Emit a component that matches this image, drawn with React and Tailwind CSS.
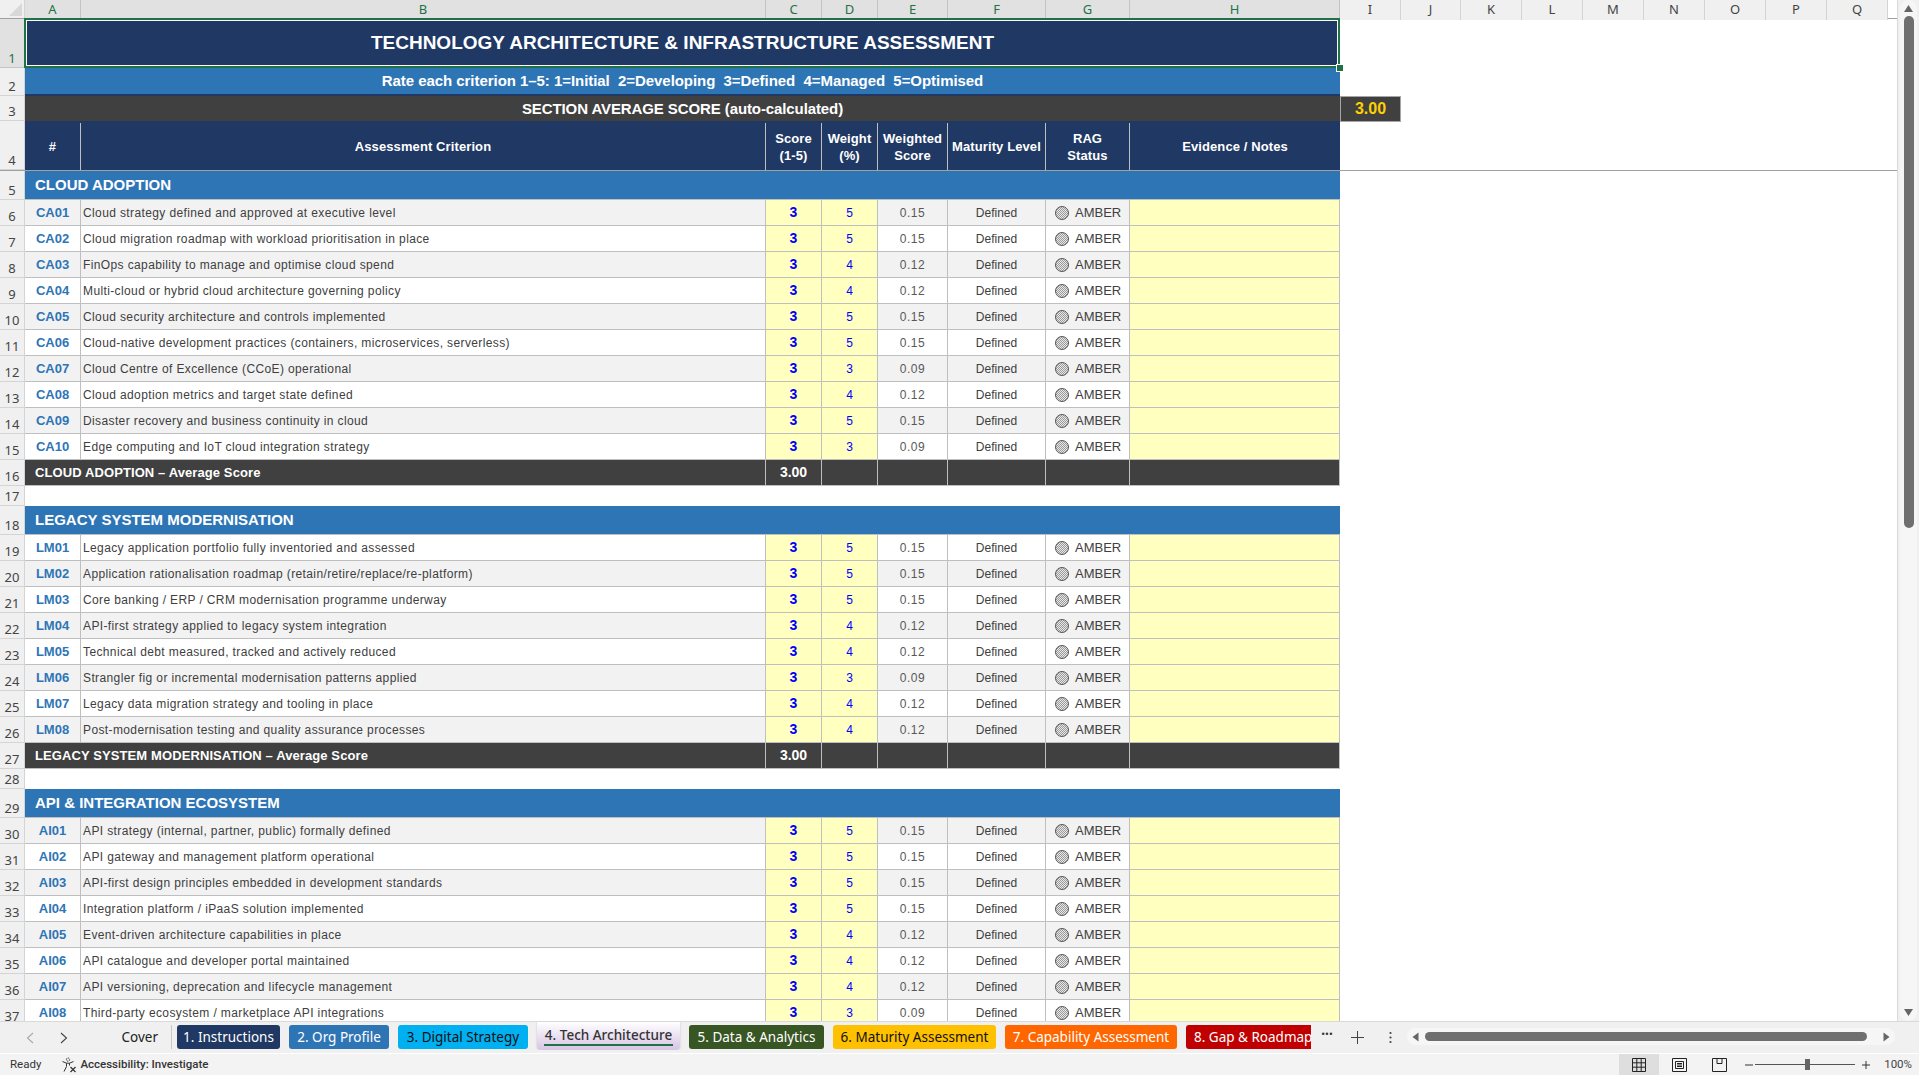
import { Fragment } from 'react'

const COLS = 'grid grid-cols-[56px_685px_56px_56px_70px_98px_84px_210px_61px_60px_61px_61px_61px_61px_61px_61px_61px]'

const sections = [
  {
    title: 'CLOUD ADOPTION',
    start: 5,
    items: [
      ['CA01', 'Cloud strategy defined and approved at executive level', 5],
      ['CA02', 'Cloud migration roadmap with workload prioritisation in place', 5],
      ['CA03', 'FinOps capability to manage and optimise cloud spend', 4],
      ['CA04', 'Multi-cloud or hybrid cloud architecture governing policy', 4],
      ['CA05', 'Cloud security architecture and controls implemented', 5],
      ['CA06', 'Cloud-native development practices (containers, microservices, serverless)', 5],
      ['CA07', 'Cloud Centre of Excellence (CCoE) operational', 3],
      ['CA08', 'Cloud adoption metrics and target state defined', 4],
      ['CA09', 'Disaster recovery and business continuity in cloud', 5],
      ['CA10', 'Edge computing and IoT cloud integration strategy', 3],
    ],
  },
  {
    title: 'LEGACY SYSTEM MODERNISATION',
    start: 18,
    items: [
      ['LM01', 'Legacy application portfolio fully inventoried and assessed', 5],
      ['LM02', 'Application rationalisation roadmap (retain/retire/replace/re-platform)', 5],
      ['LM03', 'Core banking / ERP / CRM modernisation programme underway', 5],
      ['LM04', 'API-first strategy applied to legacy system integration', 4],
      ['LM05', 'Technical debt measured, tracked and actively reduced', 4],
      ['LM06', 'Strangler fig or incremental modernisation patterns applied', 3],
      ['LM07', 'Legacy data migration strategy and tooling in place', 4],
      ['LM08', 'Post-modernisation testing and quality assurance processes', 4],
    ],
  },
  {
    title: 'API & INTEGRATION ECOSYSTEM',
    start: 29,
    items: [
      ['AI01', 'API strategy (internal, partner, public) formally defined', 5],
      ['AI02', 'API gateway and management platform operational', 5],
      ['AI03', 'API-first design principles embedded in development standards', 5],
      ['AI04', 'Integration platform / iPaaS solution implemented', 5],
      ['AI05', 'Event-driven architecture capabilities in place', 4],
      ['AI06', 'API catalogue and developer portal maintained', 4],
      ['AI07', 'API versioning, deprecation and lifecycle management', 4],
      ['AI08', 'Third-party ecosystem / marketplace API integrations', 3],
    ],
    open: true,
  },
]

const colLetters = 'ABCDEFGHIJKLMNOPQ'.split('')

const tabs = [
  { label: '1. Instructions', cls: 'w-[103px] bg-[#1f3864] text-white' },
  { label: '2. Org Profile', cls: 'w-[100px] bg-[#2e75b6] text-white' },
  { label: '3. Digital Strategy', cls: 'w-[130px] bg-[#00b0f0] text-[#111]' },
  { label: '4. Tech Architecture', active: true },
  { label: '5. Data & Analytics', cls: 'w-[135px] bg-[#375623] text-white' },
  { label: '6. Maturity Assessment', cls: 'w-[163px] bg-[#ffc000] text-[#111]' },
  { label: '7. Capability Assessment', cls: 'w-[172px] bg-[#ff6600] text-white' },
]

function RowHead({ n, selected }) {
  return (
    <div className={`w-[25px] shrink-0 flex items-end justify-center border-r border-b leading-[18px] text-[13px] font-['Noto_Sans',sans-serif] ${selected ? 'bg-[#e1e1e1] text-[#1f7246] border-[#c4c4c4]' : 'bg-[#f0f0f0] text-[#444] border-[#d4d4d4]'}`}>
      {n}
    </div>
  )
}

function Row({ n, h, selected, children }) {
  return (
    <div className={`flex ${h}`}>
      <RowHead n={n} selected={selected} />
      <div className={`${COLS} flex-1 h-full`}>{children}</div>
    </div>
  )
}

function HeaderCell({ children }) {
  return (
    <div className="flex items-center justify-center text-center border-r border-[#bfbfbf] font-bold text-[13px] tracking-[0.1px] leading-[17px] text-white last:border-r-0">
      {children}
    </div>
  )
}

function CriterionRow({ n, id, text, weight }) {
  const bg = n % 2 === 0 ? 'bg-[#f2f2f2]' : 'bg-white'
  const cell = `flex items-center justify-center border-r border-b border-[#bfbfbf] ${bg}`
  const input = 'flex items-center justify-center border-r border-b border-[#bfbfbf] bg-[#ffffbf]'
  return (
    <Row n={n} h="h-[26px]">
      <div className={`${cell} font-bold text-[13px] text-[#2e75b6]`}>{id}</div>
      <div className={`${cell} !justify-start pl-[2px] text-[12px] text-[#404040] tracking-[0.38px]`}>{text}</div>
      <div className={`${input} font-bold text-[14px] text-[#0000ff]`}>3</div>
      <div className={`${input} text-[12px] text-[#0000ff]`}>{weight}</div>
      <div className={`${cell} text-[12px] text-[#595959] tracking-[0.5px]`}>{(weight * 0.03).toFixed(2)}</div>
      <div className={`${cell} text-[12px] text-[#404040]`}>Defined</div>
      <div className={`${cell} !justify-start pl-[9px] gap-[6px] text-[13px] text-[#404040]`}>
        <span className="w-[14px] h-[14px] rounded-full border border-[#555] bg-[repeating-conic-gradient(#9a9a9a_0_25%,#e8e8e8_0_50%)] bg-[length:2px_2px]" />
        AMBER
      </div>
      <div className={input} />
    </Row>
  )
}

function Section({ title, start, items, open }) {
  const avgNum = start + items.length + 1
  return (
    <Fragment>
      <Row n={start} h="h-[29px]">
        <div className="col-span-8 flex items-center pl-[10px] bg-[#2e75b6] text-white font-bold text-[15px] border-b border-[#bfbfbf]">
          {title}
        </div>
      </Row>
      {items.map((it, i) => (
        <CriterionRow key={it[0]} n={start + 1 + i} id={it[0]} text={it[1]} weight={it[2]} />
      ))}
      {!open && (
        <Fragment>
          <Row n={avgNum} h="h-[26px]">
            <div className="col-span-2 flex items-center pl-[10px] bg-[#404040] text-white font-bold text-[13px] tracking-[0.1px] border-r border-b border-[#bfbfbf]">
              {title} – Average Score
            </div>
            <div className="flex items-center justify-center bg-[#404040] text-white font-bold text-[14px] border-r border-b border-[#bfbfbf]">3.00</div>
            {[0, 1, 2, 3, 4].map(k => (
              <div key={k} className="bg-[#404040] border-r border-b border-[#bfbfbf]" />
            ))}
          </Row>
          <Row n={avgNum + 1} h="h-[20px]" />
        </Fragment>
      )}
    </Fragment>
  )
}

function AccessIcon() {
  return (
    <svg width="16" height="16" viewBox="0 0 16 16" fill="none" stroke="#333" strokeWidth="1">
      <circle cx="7" cy="2.6" r="1.6" strokeDasharray="1.5 .7" />
      <path d="M1.5 4.5 L5.5 6.2 H8.5 L12.5 4.5 M5.5 6.2 V9.5 L3 14.5 M8.5 6.2 V8.5" />
      <path d="M9.5 10 L14.5 15 M14.5 10 L9.5 15" strokeWidth="1.2" />
    </svg>
  )
}

function ViewIcons() {
  return (
    <div className="flex items-stretch h-full text-[#333]">
      <div className="w-[40px] flex items-center justify-center bg-[#dedede]">
        <svg width="14" height="14" viewBox="0 0 14 14" fill="none" stroke="#222" strokeWidth="1">
          <path d="M.5.5h13v13H.5zM.5 4.8h13M.5 9.2h13M4.8.5v13M9.2.5v13" />
        </svg>
      </div>
      <div className="w-[40px] flex items-center justify-center">
        <svg width="15" height="14" viewBox="0 0 15 14" fill="none" stroke="#222" strokeWidth="1">
          <path d="M.5.5h14v13H.5zM3.5 3.5h8v7h-8zM5 5.5h5M5 7h5M5 8.5h5" />
        </svg>
      </div>
      <div className="w-[40px] flex items-center justify-center">
        <svg width="15" height="14" viewBox="0 0 15 14" fill="none" stroke="#222" strokeWidth="1">
          <path d="M.5.5h14v13H.5zM5 .5v5h5v-5" />
        </svg>
      </div>
    </div>
  )
}

export default function App() {
  return (
    <div className="h-screen flex flex-col overflow-hidden bg-white font-['Liberation_Sans',Arial,sans-serif]">
      <div className="flex-1 min-h-0 flex">
        {/* Sheet */}
        <div className="flex-1 min-w-0 relative overflow-hidden">
          {/* Column letters */}
          <div className="flex h-[19px] border-b border-[#a0a0a0]">
            <div className="w-[25px] shrink-0 bg-[#f0f0f0] border-r border-[#d4d4d4] flex items-end justify-end">
              <div className="w-0 h-0 mb-[2px] mr-[2px] border-l-[13px] border-l-transparent border-b-[13px] border-b-[#d8d8d8]" />
            </div>
            <div className={`${COLS} flex-1`}>
              {colLetters.map((c, i) => (
                <div
                  key={c}
                  className={`flex items-center justify-center text-[13px] font-['Noto_Sans',sans-serif] border-r ${i < 8 ? 'bg-[#e1e1e1] text-[#1f7246] border-[#c4c4c4]' : 'bg-[#f0f0f0] text-[#444] border-[#d4d4d4]'}`}
                >
                  {c}
                </div>
              ))}
            </div>
          </div>

          {/* Frozen header rows */}
          <Row n={1} h="h-[49px]" selected>
            <div className="col-span-8 flex items-center justify-center bg-[#1f3864] text-white font-bold text-[19px]">
              TECHNOLOGY ARCHITECTURE &amp; INFRASTRUCTURE ASSESSMENT
            </div>
          </Row>
          <Row n={2} h="h-[28px]">
            <div className="col-span-8 flex items-center justify-center bg-[#2e75b6] text-white font-bold text-[15px] tracking-[-0.05px] border-b-2 border-[#1f3864]">
              Rate each criterion 1–5: 1=Initial&nbsp; 2=Developing&nbsp; 3=Defined&nbsp; 4=Managed&nbsp; 5=Optimised
            </div>
          </Row>
          <Row n={3} h="h-[25px]">
            <div className="col-span-8 flex items-center justify-center bg-[#404040] text-white font-bold text-[15px] tracking-[-0.1px]">
              SECTION AVERAGE SCORE (auto-calculated)
            </div>
            <div className="flex items-center justify-center bg-[#404040] border border-[#a6a6a6] text-[#ffd000] font-bold text-[16px]">
              3.00
            </div>
          </Row>
          <div className="flex h-[50px] border-b border-[#a0a0a0]">
            <RowHead n={4} />
            <div className={`${COLS} flex-1`}>
              <div className="col-span-8 grid grid-cols-[56px_685px_56px_56px_70px_98px_84px_1fr] bg-[#1f3864] pt-[2px]">
                <HeaderCell>#</HeaderCell>
                <HeaderCell>Assessment Criterion</HeaderCell>
                <HeaderCell>Score<br />(1-5)</HeaderCell>
                <HeaderCell>Weight<br />(%)</HeaderCell>
                <HeaderCell>Weighted<br />Score</HeaderCell>
                <HeaderCell>Maturity Level</HeaderCell>
                <HeaderCell>RAG<br />Status</HeaderCell>
                <HeaderCell>Evidence / Notes</HeaderCell>
              </div>
            </div>
          </div>

          {sections.map(s => (
            <Section key={s.title} {...s} />
          ))}

          {/* Selection around merged title */}
          <div className="absolute left-[24px] top-[18px] w-[1316px] h-[50px] border-2 border-[#1f7246] outline outline-1 -outline-offset-3 outline-white pointer-events-none" />
          <div className="absolute left-[1336px] top-[64px] w-[6px] h-[6px] bg-[#1f7246] border border-white box-content pointer-events-none" />
        </div>

        {/* Vertical scrollbar */}
        <div className="w-[22px] shrink-0 bg-[#f0f0f0] border-l border-[#d9d9d9] flex justify-center">
          <div className="w-[17px] h-full rounded-full bg-[#f6f6f6] flex flex-col items-center py-[5px]">
            <svg width="9" height="7" viewBox="0 0 9 7" fill="#666"><path d="M4.5 0 9 7H0z" /></svg>
            <div className="w-[10px] h-[512px] mt-[4px] rounded-full bg-[#6f6f6f]" />
            <div className="flex-1" />
            <svg width="9" height="7" viewBox="0 0 9 7" fill="#666"><path d="M4.5 7 9 0H0z" /></svg>
          </div>
        </div>
      </div>

      {/* Sheet tabs */}
      <div className="h-[32px] shrink-0 bg-[#f0f0f0] flex items-start border-t border-[#d9d9d9] text-[13.5px] font-['Noto_Sans',sans-serif]">
        <div className="w-[72px] shrink-0 h-full flex items-center gap-[26px] pl-[26px] text-[#8a8a8a]">
          <svg width="8" height="12" viewBox="0 0 8 12" fill="none" stroke="#a8a8a8" strokeWidth="1.1"><path d="M7 1 1.5 6 7 11" /></svg>
          <svg width="8" height="12" viewBox="0 0 8 12" fill="none" stroke="#444" strokeWidth="1.1"><path d="M1 1 6.5 6 1 11" /></svg>
        </div>
        <div className="flex items-start w-[1239px] shrink-0 overflow-hidden">
          <div className="w-[100px] shrink-0 -mr-[4px] h-[24px] mt-[3px] flex items-center justify-end pr-[13px] text-[#222] border-r border-[#c8c8c8]">Cover</div>
          {tabs.map(t =>
            t.active ? (
              <div key={t.label} className="w-[143px] shrink-0 ml-[9px] h-[28px] rounded-b-[4px] bg-gradient-to-b from-white to-[#d6c4e4] shadow-[0_0_2px_#bbb] flex flex-col items-center justify-center font-medium text-[#333] leading-[18px]">
                <span className="border-b-2 border-[#1f7246] px-[1px]">{t.label}</span>
              </div>
            ) : (
              <div key={t.label} className={`${t.cls} h-[24px] mt-[3px] ml-[9px] shrink-0 rounded-[3px] flex items-center justify-center`}>
                {t.label}
              </div>
            )
          )}
          <div className="w-[125px] h-[24px] mt-[3px] ml-[9px] shrink-0 bg-[#c00000] text-white rounded-l-[3px] flex items-center pl-[8px] whitespace-nowrap overflow-hidden">
            8. Gap &amp; Roadmap
          </div>
        </div>
        <div className="h-full flex items-center text-[#333]">
          <span className="w-[32px] text-center font-bold leading-none pb-[6px]">···</span>
          <svg className="ml-[8px]" width="13" height="13" viewBox="0 0 13 13" stroke="#444" strokeWidth="1"><path d="M6.5 0v13M0 6.5h13" /></svg>
          <svg className="ml-[25px]" width="3" height="13" viewBox="0 0 3 13" fill="#444"><circle cx="1.5" cy="2" r="1.1" /><circle cx="1.5" cy="6.5" r="1.1" /><circle cx="1.5" cy="11" r="1.1" /></svg>
        </div>
        {/* Horizontal scrollbar */}
        <div className="ml-auto mr-[24px] mt-[6px] w-[488px] h-[17px] rounded-full bg-[#f6f6f6] flex items-center px-[5px]">
          <svg width="7" height="10" viewBox="0 0 7 10" fill="#666"><path d="M.5 5 6.5.5v9z" /></svg>
          <div className="ml-[6px] w-[442px] h-[9px] rounded-full bg-[#6f6f6f]" />
          <svg className="ml-auto" width="7" height="10" viewBox="0 0 7 10" fill="#666"><path d="M6.5 5 .5.5v9z" /></svg>
        </div>
      </div>

      {/* Status bar */}
      <div className="h-[22px] shrink-0 bg-[#f3f3f3] border-t border-white flex items-center text-[11.5px] text-[#333] font-['Roboto',sans-serif]">
        <span className="ml-[10px]">Ready</span>
        <span className="ml-[20px] flex items-center gap-[3px] font-medium">
          <AccessIcon />
          Accessibility: Investigate
        </span>
        <div className="ml-auto h-full flex items-center">
          <ViewIcons />
          <svg className="ml-[5px]" width="10" height="10" viewBox="0 0 10 10" stroke="#333"><path d="M1 5h8" /></svg>
          <div className="ml-[1px] w-[100px] h-px bg-[#555] relative">
            <span className="absolute left-[50px] -top-[5px] w-[5px] h-[11px] bg-[#666]" />
          </div>
          <svg className="ml-[6px]" width="10" height="10" viewBox="0 0 10 10" stroke="#333"><path d="M1 5h8M5 1v8" /></svg>
          <span className="ml-[13px] mr-[7px] text-[#444]">100%</span>
        </div>
      </div>
    </div>
  )
}
